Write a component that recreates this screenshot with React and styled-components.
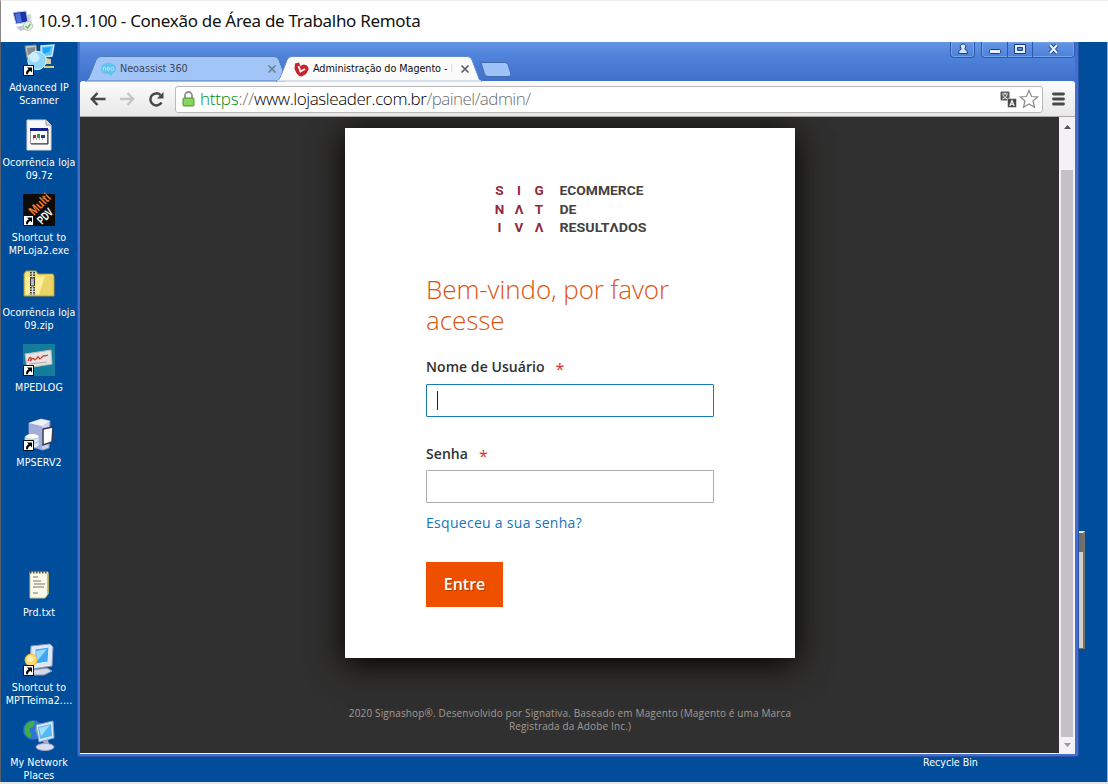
import React from "react";
import styled, { createGlobalStyle } from "styled-components";

const uiFont = `"DejaVu Sans Condensed", "DejaVu Sans", sans-serif`;
const webFont = `"Open Sans", "Noto Sans", sans-serif`;

const Global = createGlobalStyle`
  * { box-sizing: border-box; }
  body { margin: 0; background: #e4e4e4; font-family: ${uiFont}; overflow: hidden; }
  svg { display: block; flex: none; overflow: visible; }
`;

const Screen = styled.div`
  width: 1108px;
  height: 784px;
  display: flex;
  flex-direction: column;
  overflow: hidden;
`;
const RemoteBar = styled.header`
  height: 42px;
  flex: none;
  display: flex;
  align-items: center;
  gap: 5px;
  padding: 0 0 1px 12px;
  background: #fff;
  border-left: 1px solid #888;
  border-top: 1px solid #ededed;
`;
const RemoteTitle = styled.h1`
  margin: 0;
  font: 400 17px/24px "Noto Sans", sans-serif;
  color: #111;
  white-space: nowrap;
  letter-spacing: -0.3px;
`;
const Desktop = styled.main`
  position: relative;
  height: 740px;
  flex: none;
  background: #004e9b;
  border-left: 1px solid #59606b;
  border-right: 1px solid #8fb3dc;
`;
const IconColumn = styled.div`
  display: grid;
  grid-auto-rows: 75px;
  width: 76px;
  padding-top: 2px;
`;
const Shortcut = styled.div`
  grid-row: ${(p) => p.$row};
  display: flex;
  flex-direction: column;
  align-items: center;
  gap: 5px;
`;
const ShortcutLabel = styled.div`
  font-size: 10.6px;
  line-height: 13px;
  letter-spacing: 0.1px;
  color: #fff;
  text-align: center;
  white-space: pre;
`;
const BinLabel = styled(ShortcutLabel)`
  position: absolute;
  left: 922px;
  top: 714px;
  letter-spacing: 0;
`;
const BehindWindow = styled.div`
  position: absolute;
  left: 1077px;
  top: 489px;
  width: 7px;
  height: 118px;
  background: #d2d0c8;
  border: 1px solid #6d6a62;
  border-top: 2px solid #e8e6e0;
  border-right: 2px solid #77746c;
`;
const BehindThumb = styled.div`
  height: 19px;
  background: #6e6d6b;
`;

const Window = styled.section`
  position: absolute;
  left: 76px;
  top: 0;
  width: 1002px;
  height: 715px;
  display: flex;
  flex-direction: column;
  background: #3f6fd0;
  border: solid #2c55a5;
  border-width: 0 1px 1px 1px;
  border-radius: 0 0 3px 3px;
  padding: 0 3px 2px 2px;
`;
const TabStrip = styled.div`
  height: 39px;
  flex: none;
  display: flex;
  justify-content: space-between;
  align-items: flex-start;
  background: linear-gradient(#6496e6, #4f83da 35%, #4070cc);
`;
const Tabs = styled.div`
  display: flex;
  align-items: flex-end;
  height: 39px;
  padding-left: 5px;
`;
const Tab = styled.div`
  position: relative;
  width: ${(p) => p.$w}px;
  height: 25px;
  margin-left: ${(p) => p.$shift || 0}px;
`;
const TabShape = styled.svg`
  position: absolute;
  inset: 0;
`;
const TabContent = styled.div`
  position: relative;
  display: flex;
  align-items: center;
  gap: ${(p) => p.$gap}px;
  height: 25px;
  padding: 1px ${(p) => p.$right}px 0 ${(p) => p.$left}px;
`;
const TabTitle = styled.span`
  flex: 1;
  min-width: 0;
  white-space: nowrap;
  font-size: 10.8px;
  line-height: 16px;
  letter-spacing: ${(p) => p.$track || 0}px;
  color: ${(p) => p.$color};
`;
const Faded = styled.span`
  color: #d9d9d9;
`;
const NewTab = styled.svg`
  margin: 0 0 4px -2px;
`;
const WindowButtons = styled.div`
  display: flex;
  gap: 6px;
`;
const ButtonGroup = styled.div`
  display: flex;
  height: 16px;
  border: 1px solid #2f58ac;
  border-top: 0;
  border-radius: 0 0 4px 4px;
  box-shadow: inset 0 0 0 1px #76a2ea;
`;
const ControlButton = styled.div`
  width: ${(p) => p.$w}px;
  display: flex;
  justify-content: center;
  & + & { border-left: 1px solid #2f58ac; }
`;
const Toolbar = styled.div`
  height: 36px;
  flex: none;
  display: flex;
  align-items: center;
  padding: 0 10px 0 10px;
  background: linear-gradient(#fbfbfb, #e9e8e8);
  border-top: 1px solid #f8fbff;
  border-bottom: 1px solid #a9a7a7;
  border-radius: 3px 3px 0 0;
`;
const NavIcons = styled.div`
  display: flex;
  align-items: center;
  gap: 13px;
  width: 85px;
`;
const AddressBar = styled.div`
  flex: 1;
  height: 27px;
  display: flex;
  align-items: center;
  padding: 0 3px 0 6px;
  margin-right: 9px;
  background: #fff;
  border: 1px solid #b9b9b9;
  border-radius: 3px;
`;
const Url = styled.div`
  flex: 1;
  margin-left: 5px;
  font: 300 17px/24px "Open Sans", sans-serif;
  white-space: nowrap;
`;
const UrlPart = styled.span`
  color: ${(p) => p.$color};
  letter-spacing: ${(p) => p.$track || 0}px;
`;
const Viewport = styled.div`
  flex: 1;
  display: flex;
  min-height: 0;
  border-bottom: 1px solid #f0f4fc;
`;
const Page = styled.div`
  flex: 1;
  display: flex;
  flex-direction: column;
  align-items: center;
  padding: 11px 0 0 1px;
  background: #303030;
  font-family: ${webFont};
  overflow: hidden;
`;
const Card = styled.section`
  width: 450px;
  height: 530px;
  flex: none;
  padding: 54px 81px 0;
  background: #fff;
  box-shadow: 0 5px 30px 0 #000, 0 10px 20px 12px rgba(52, 48, 38, 0.5);
`;
const Logo = styled.svg`
  margin-left: 68px;
`;
const Heading = styled.h2`
  margin: 38px 0 0;
  font: 300 26px/31px ${webFont};
  letter-spacing: -0.08px;
  color: #dc5410;
`;
const Label = styled.label`
  display: flex;
  align-items: center;
  gap: 11px;
  height: 20px;
  margin-top: ${(p) => p.$top}px;
  font: 600 14px/20px ${webFont};
  letter-spacing: 0.06px;
  color: #303030;
`;
const Field = styled.div`
  display: flex;
  align-items: center;
  width: 288px;
  height: 33px;
  margin-top: ${(p) => p.$top}px;
  padding-left: 10px;
  border: 1px solid ${(p) => (p.$focus ? "#1979b8" : "#adadad")};
  border-radius: 1px;
`;
const Caret = styled.span`
  width: 1px;
  height: 19px;
  background: #222;
`;
const Forgot = styled.a`
  display: block;
  margin-top: 10px;
  font-size: 14px;
  line-height: 20px;
  letter-spacing: 0.29px;
  color: #1475bd;
`;
const Submit = styled.div`
  display: flex;
  align-items: center;
  justify-content: center;
  width: 77px;
  height: 45px;
  margin-top: 29px;
  padding-bottom: 1px;
  background: #ef5000;
  color: #fff;
  font-weight: 600;
  font-size: 16px;
  text-shadow: 1px 1px 0 rgba(0, 0, 0, 0.3);
`;
const Footer = styled.footer`
  margin-top: 49px;
  text-align: center;
  white-space: pre;
  font: 400 10px/13px "Open Sans", sans-serif;
  letter-spacing: 0.15px;
  color: #a09c95;
`;
const Scrollbar = styled.div`
  width: 16px;
  display: flex;
  flex-direction: column;
  align-items: center;
  background: #f3f1f5;
`;
const ScrollArrow = styled.div`
  display: flex;
  align-items: center;
  justify-content: center;
  height: ${(p) => p.$h}px;
  padding-bottom: ${(p) => p.$pad || 0}px;
`;
const Thumb = styled.div`
  width: 12px;
  height: 567px;
  background: #c3c1c5;
`;

const ShortcutArrow = () => (
  <g>
    <rect x="0.5" y="21.5" width="10" height="10" fill="#fff" stroke="#111" />
    <path d="M4 23.500h5v5l-1.700-1.700c-1.600.8-2.200 1.800-2.300 3.400H3.200c-.5-2.200.4-4 2.400-5z" fill="#000" />
  </g>
);
const Glyph = ({ children, arrow }) => (
  <svg width="32" height="32" viewBox="0 0 32 32">
    {children}
    {arrow && <ShortcutArrow />}
  </svg>
);
const Globe = ({ cx, cy, r }) => (
  <g>
    <circle cx={cx} cy={cy} r={r} fill="#2f74d8" stroke="#1b4f9e" strokeWidth="0.6" />
    <path d={`M${cx - r * 0.8} ${cy - 4}q4-5 8-5q3 1 1 4q-1 3-4 3q-1 4 1 5q1 5-2 5q-6-5-4-12z`} fill="#3fae42" />
    <path d={`M${cx + 3} ${cy - 3}q4-2 5 2q-1 5-4 5q-3-3-1-7z`} fill="#5bc24f" />
  </g>
);
const drawings = {
  scanner: (
    <Glyph arrow>
      <path d="M2 2l11-1 1 11-10 2z" fill="#c9cac5" stroke="#8b8b88" />
      <path d="M4 4l8-1v7l-7 1z" fill="#858b91" />
      <path d="M18 2l13-1-2 11-11 1z" fill="#5ac8fb" stroke="#d9e6ee" strokeWidth="1.4" />
      <path d="M20 4l8-1-2 5-6 2z" fill="#1aa4f5" />
      <path d="M23 14l5 1v5h-5z" fill="#d6cba2" />
      <path d="M21 23h10" stroke="#d6cf70" strokeWidth="2" />
      <circle cx="14" cy="16.500" r="9.200" fill="#8dd6fa" stroke="#dff4ff" />
      <circle cx="11.500" cy="13.500" r="5" fill="#d4f1ff" opacity="0.85" />
    </Glyph>
  ),
  sevenZip: (
    <Glyph>
      <path d="M4 1h19l5 5v25H4z" fill="#f8f8f8" stroke="#d6d6d6" />
      <path d="M23 1v5h5" fill="#ddd" stroke="#999" />
      <rect x="7.500" y="9.500" width="17" height="15" fill="#fff" stroke="#999" />
      <rect x="7" y="9" width="18" height="3" fill="#14208c" />
      <path d="M25 10v15H8" fill="none" stroke="#333" />
      <path d="M10 16h3v3h-3z" fill="#c31c31" />
      <path d="M14 15h3v4h-3z" fill="#2b9a43" />
      <path d="M18 16h4v3h-4z" fill="#243ab3" />
      <path d="M10 20h12" stroke="#555" strokeDasharray="1 2" />
    </Glyph>
  ),
  multi: (
    <Glyph arrow>
      <rect width="32" height="32" fill="#0d0b0a" />
      <text transform="translate(11 22) rotate(-45)" fontFamily="Liberation Sans, sans-serif" fontSize="13" fontWeight="700" fill="#f07a2c" textLength="25" lengthAdjust="spacingAndGlyphs">Multi</text>
      <text transform="translate(19 31) rotate(-45)" fontFamily="Liberation Sans, sans-serif" fontSize="12" fontWeight="700" fill="#fff" textLength="17" lengthAdjust="spacingAndGlyphs">PDV</text>
    </Glyph>
  ),
  zip: (
    <Glyph>
      <path d="M1 5l2-3h10l2 3h15l1 2v20H1z" fill="#f4e27b" stroke="#ac9632" />
      <path d="M3 8h26v17H3z" fill="#fbee9c" />
      <path d="M22 7h8v19H16z" fill="#e6cb52" opacity="0.7" />
      <path d="M9.500 3v23" stroke="#333" strokeWidth="5" strokeDasharray="1.500 1" />
      <path d="M9.500 3v23" stroke="#ddd" strokeWidth="1.500" />
      <rect x="7.500" y="9" width="4" height="8" rx="1" fill="#bbb" stroke="#333" />
    </Glyph>
  ),
  pedlog: (
    <Glyph arrow>
      <rect width="32" height="32" fill="#137d9c" />
      <path d="M2 10l26-4 1 14-25 4z" fill="#e4e3df" stroke="#bbb" />
      <path d="M5 17q2-5 3-3t-1 3q3-4 4-2t3-1q1-2 2 0t3-1q2-2 3-1l3-1" fill="none" stroke="#cf3034" strokeWidth="1.300" />
      <path d="M6 20l18-2" stroke="#aaa" />
    </Glyph>
  ),
  server: (
    <Glyph arrow>
      <path d="M6 4L18 0l9 2-1 27-6 2-14-4z" fill="#ccd2ef" stroke="#8791c4" />
      <path d="M6 4l13 3v24L6 26z" fill="#a3addb" />
      <path d="M6 4L18 0l9 2-8 5z" fill="#eef0fb" />
      <path d="M20 10l10-2-1 15-9 3z" fill="#fdfdff" stroke="#343852" strokeWidth="1.500" />
      <ellipse cx="9" cy="18" rx="7" ry="3" fill="#fff" />
      <path d="M2 18v8c2 4 12 4 14 0v-8c-2 3-12 3-14 0z" fill="#dce8f6" stroke="#a9bfd9" />
      <path d="M2 22c3 3 11 3 14 0" fill="none" stroke="#9ab5d5" />
    </Glyph>
  ),
  notes: (
    <Glyph>
      <path d="M7 3h18v22l-3 4H7z" fill="#fbfae8" stroke="#c6c29c" />
      <path d="M7 3h18" stroke="#555" strokeWidth="3" strokeDasharray="1.500 1.500" />
      <path d="M10 8h5M10 12h8M11 15h11M10 18h11M10 24h5" stroke="#777" strokeWidth="1.200" />
      <path d="M25 5v20" stroke="#c4b454" strokeWidth="1.500" />
    </Glyph>
  ),
  pc: (
    <Glyph arrow>
      <path d="M8 2l19-2 3 3-1 19-19 3-3-3z" fill="#e1e7f2" stroke="#8797b9" />
      <path d="M12 5l14-2-1 15-13 2z" fill="#3fa7f3" stroke="#dff0ff" />
      <path d="M13 7l11-2-10 12z" fill="#9bdafd" />
      <path d="M9 26l15-2 5 3-8 4H9z" fill="#d4d9e5" stroke="#8c98b0" />
      <circle cx="8" cy="16" r="6" fill="#ffdc69" stroke="#f2b832" />
      <circle cx="7" cy="15" r="3" fill="#fff1b5" />
    </Glyph>
  ),
  network: (
    <Glyph>
      <Globe cx={10} cy={11} r={10} />
      <path d="M13 6l17-4 1 17-15 4z" fill="#d9e6f8" stroke="#8d9dc3" />
      <path d="M15 8l13-3 1 12-12 3z" fill="#55b9f8" />
      <path d="M16 9l11-3-9 11z" fill="#a7defd" />
      <path d="M20 22l5-1 1 4h-5z" fill="#a9afd2" />
      <ellipse cx="22" cy="28" rx="9" ry="3.500" fill="#dadcf0" stroke="#9ea4cb" />
    </Glyph>
  ),
};

const shortcuts = [
  { row: 1, icon: "scanner", label: "Advanced IP\nScanner" },
  { row: 2, icon: "sevenZip", label: "Ocorrência loja\n09.7z" },
  { row: 3, icon: "multi", label: "Shortcut to\nMPLoja2.exe" },
  { row: 4, icon: "zip", label: "Ocorrência loja\n09.zip" },
  { row: 5, icon: "pedlog", label: "MPEDLOG" },
  { row: 6, icon: "server", label: "MPSERV2" },
  { row: 8, icon: "notes", label: "Prd.txt" },
  { row: 9, icon: "pc", label: "Shortcut to\nMPTTeima2...." },
  { row: 10, icon: "network", label: "My Network\nPlaces" },
];

const CloseX = ({ color }) => (
  <svg width="10" height="10" viewBox="0 0 10 10">
    <path d="M1.500 1.500l7 7M8.500 1.500l-7 7" stroke={color} strokeWidth="1.700" />
  </svg>
);

const logoRows = [
  ["S", "I", "G", "ECOMMERCE", 84],
  ["N", "Λ", "T", "DE", 17],
  ["I", "V", "Λ", "RESULTΛDOS", 87],
];

function BrowserTabs() {
  return (
    <TabStrip>
      <Tabs>
        <Tab $w={203}>
          <TabShape width="203" height="25" viewBox="0 0 203 25">
            <path d="M0 25C4 24 4 21 6 17L11 4Q12.500.5 16 .5H189Q193 .5 194 4L201 23V25Z" fill="#a2c5f8" stroke="#5579b6" />
          </TabShape>
          <TabContent $left={15} $right={11} $gap={3}>
            <svg width="17" height="15" viewBox="0 0 17 15">
              <path d="M8.500 1C4 1 1 3 1 6.500S4 12 8 12l4 2 .5-2.500C15 10.500 16 9 16 6.500 16 3 13 1 8.500 1z" fill="#5fc4ee" />
              <path d="M3.500 8.500V5.500q2-1 2 1v2M7 7h2.500q0-2-1.300-2T7 7t2.500 1.300" fill="none" stroke="#b6e3fa" />
              <circle cx="12.300" cy="6.800" r="1.500" fill="none" stroke="#b6e3fa" />
            </svg>
            <TabTitle $color="#3c4654" $track={-0.06}>Neoassist 360</TabTitle>
            <CloseX color="#6d7d94" />
          </TabContent>
        </Tab>
        <Tab $w={206} $shift={-12}>
          <TabShape width="206" height="25" viewBox="0 0 206 25">
            <path d="M0 25C4 24 4 21 6 17L11 4Q12.500.5 16 .5H191Q195 .5 196 4L202 20Q203 25 206 25Z" fill="#fbfbfb" stroke="#668cc8" />
            <path d="M1 25h204" stroke="#fbfbfb" />
          </TabShape>
          <TabContent $left={18} $right={12} $gap={4}>
            <svg width="15" height="15" viewBox="0 0 15 15">
              <path d="M1 1.500L5 .5L6.500 4Q9 1.500 12 3Q15 5 14.500 8L12 12L8 14.500Q5 14.500 3 12L.5 7Z" fill="#c9242e" />
              <path d="M4.500 4L6.500 9.500L11 7" fill="none" stroke="#fff" strokeWidth="1.800" />
            </svg>
            <TabTitle $color="#111" $track={-0.1}>Administração do Magento - <Faded>l</Faded></TabTitle>
            <CloseX color="#5b5b5b" />
          </TabContent>
        </Tab>
        <NewTab width="32" height="16" viewBox="0 0 32 16">
          <path d="M1 1.500H25Q27 1.500 28 3.500L31 13Q31 15.500 28 15.500H8Q5.500 15.500 4.500 13Z" fill="#9dc2f8" stroke="#4267ab" />
        </NewTab>
      </Tabs>
      <WindowButtons>
        <ButtonGroup>
          <ControlButton $w={23}>
            <svg width="12" height="13" viewBox="0 0 12 13">
              <path d="M6 2a2.500 2.500 0 0 1 2 4.300L8 7.500Q10.500 7.500 10.500 11.500h-9Q1.500 7.500 4 7.500L4 6.300A2.500 2.500 0 0 1 6 2z" fill="#d6e7ff" stroke="#1f3e7a" />
            </svg>
          </ControlButton>
        </ButtonGroup>
        <ButtonGroup>
          <ControlButton $w={25}>
            <svg width="14" height="13" viewBox="0 0 14 13"><rect x="1.500" y="7.500" width="11" height="4" rx="1" fill="#e4efff" stroke="#1f3e7a" /></svg>
          </ControlButton>
          <ControlButton $w={25}>
            <svg width="14" height="13" viewBox="0 0 14 13"><path fillRule="evenodd" d="M1.500 2.500h11v9h-11zM4.500 5.500v3h5v-3z" fill="#e4efff" stroke="#1f3e7a" /></svg>
          </ControlButton>
          <ControlButton $w={42}>
            <svg width="14" height="13" viewBox="0 0 14 13">
              <path d="M3 3l7 8M10 3l-7 8" stroke="#1f3e7a" strokeWidth="4" />
              <path d="M3 3l7 8M10 3l-7 8" stroke="#e4efff" strokeWidth="2.200" />
            </svg>
          </ControlButton>
        </ButtonGroup>
      </WindowButtons>
    </TabStrip>
  );
}

function BrowserToolbar() {
  return (
    <Toolbar>
      <NavIcons>
        <svg width="16" height="16" viewBox="0 0 16 16"><path d="M15.500 8H2M7.500 2L1.800 8l5.700 6" fill="none" stroke="#474747" strokeWidth="2.500" /></svg>
        <svg width="16" height="16" viewBox="0 0 16 16"><path d="M1 8h13M8.500 2l5.700 6-5.700 6" fill="none" stroke="#c5c5c5" strokeWidth="2.300" /></svg>
        <svg width="17" height="16" viewBox="0 0 17 16">
          <path d="M13.500 11.500A6 6 0 1 1 12.500 4" fill="none" stroke="#474747" strokeWidth="2.500" />
          <path d="M15.500 1v6.500H9z" fill="#474747" />
        </svg>
      </NavIcons>
      <AddressBar>
        <svg width="13" height="16" viewBox="0 0 13 16">
          <path d="M3 8V4.500a3.500 3.500 0 0 1 7 0V8" fill="none" stroke="#8c9189" strokeWidth="1.800" />
          <rect x="1" y="7" width="11" height="8" rx="1" fill="#7ccb52" stroke="#4f9d31" />
          <path d="M2 9h9M2 11h9M2 13h9" stroke="#a9e27f" strokeWidth="0.700" />
        </svg>
        <Url>
          <UrlPart $color="#008a12" $track={-0.2}>https</UrlPart>
          <UrlPart $color="#6d6d6d">://</UrlPart>
          <UrlPart $color="#000" $track={-0.42}>www.lojasleader.com.br</UrlPart>
          <UrlPart $color="#6d6d6d" $track={-0.55}>/painel/admin/</UrlPart>
        </Url>
        <svg width="17" height="17" viewBox="0 0 17 17">
          <rect x="0.500" y="0.500" width="9" height="9" rx="1" fill="#5a5a5a" />
          <path d="M2 3h6M5 1.500V3M3 4q1 3 4.500 4M7 4q-1 3-4.500 4" fill="none" stroke="#fff" strokeWidth="0.900" />
          <rect x="7.500" y="7.500" width="9" height="9" rx="1" fill="#4a4a4a" stroke="#fff" strokeWidth="0.500" />
          <path d="M9.800 15L12 9.500 14.200 15M10.500 13.200h3" fill="none" stroke="#fff" strokeWidth="1.100" />
        </svg>
        <svg width="22" height="20" viewBox="0 0 22 20">
          <path d="M12 1.500l2.600 6 6.100.5-4.700 4 1.500 6.300L12 15l-5.500 3.300L8 12 3.300 8l6.100-.5z" fill="#fff" stroke="#8a8a8a" strokeWidth="1.200" />
        </svg>
      </AddressBar>
      <svg width="13" height="14" viewBox="0 0 13 14"><path d="M1.500 2h10M1.500 7h10M1.500 12h10" stroke="#484848" strokeWidth="2.800" strokeLinecap="round" /></svg>
    </Toolbar>
  );
}

const Required = styled.span`
  color: #e02b27;
  font-weight: 400;
  font-size: 16px;
  padding-top: 4px;
`;
const Star = () => <Required>*</Required>;

function LoginCard() {
  return (
    <Card>
      <Logo width="154" height="54" viewBox="0 0 154 54" fontFamily="Roboto, sans-serif" fontWeight="700" fontSize="13.500">
        {logoRows.map(([a, b, c, word, w], i) => (
          <g key={word} transform={`translate(0 ${13 + i * 18.500})`}>
            <g fill="#95273c" textAnchor="middle">
              <text x="5.500">{a}</text>
              <text x="25">{b}</text>
              <text x="45">{c}</text>
            </g>
            <text x="65.500" fill="#454240" textLength={w} lengthAdjust="spacingAndGlyphs">{word}</text>
          </g>
        ))}
      </Logo>
      <Heading>Bem-vindo, por favor acesse</Heading>
      <Label $top={21}>Nome de Usuário <Star /></Label>
      <Field $top={7} $focus><Caret /></Field>
      <Label $top={27}>Senha <Star /></Label>
      <Field $top={6} />
      <Forgot>Esqueceu a sua senha?</Forgot>
      <Submit>Entre</Submit>
    </Card>
  );
}

export default function App() {
  return (
    <Screen>
      <Global />
      <RemoteBar>
        <svg width="20" height="22" viewBox="0 0 20 22">
          <path d="M12 5l6-1 1 13-6 2z" fill="#d3d7df" />
          <path d="M0 2.500L13 1l2 11-12 2z" fill="#1b35a8" stroke="#c3cde2" />
          <path d="M2 4l5-1 2 9-5 1z" fill="#4b72d8" />
          <path d="M3 17l8-2 4 4-8 2z" fill="#c2cad3" />
          <circle cx="15" cy="16" r="4.500" fill="#e8efe6" stroke="#b6c1b6" />
          <path d="M12.500 16l2 2 3-4" fill="none" stroke="#7cb478" strokeWidth="1.500" />
        </svg>
        <RemoteTitle>10.9.1.100 - Conexão de Área de Trabalho Remota</RemoteTitle>
      </RemoteBar>
      <Desktop>
        <IconColumn>
          {shortcuts.map((s) => (
            <Shortcut key={s.row} $row={s.row}>
              {drawings[s.icon]}
              <ShortcutLabel>{s.label}</ShortcutLabel>
            </Shortcut>
          ))}
        </IconColumn>
        <BehindWindow><BehindThumb /></BehindWindow>
        <Window>
          <BrowserTabs />
          <BrowserToolbar />
          <Viewport>
            <Page>
              <LoginCard />
              <Footer>{"2020 Signashop®. Desenvolvido por Signativa. Baseado em Magento (Magento é uma Marca\nRegistrada da Adobe Inc.)"}</Footer>
            </Page>
            <Scrollbar>
              <ScrollArrow $h={53} $pad={34}>
                <svg width="7" height="4" viewBox="0 0 7 4"><path d="M3.500 0L7 4H0z" fill="#505050" /></svg>
              </ScrollArrow>
              <Thumb />
              <ScrollArrow $h={15}>
                <svg width="7" height="4" viewBox="0 0 7 4"><path d="M3.500 4L7 0H0z" fill="#999" /></svg>
              </ScrollArrow>
            </Scrollbar>
          </Viewport>
        </Window>
        <BinLabel>Recycle Bin</BinLabel>
      </Desktop>
    </Screen>
  );
}
